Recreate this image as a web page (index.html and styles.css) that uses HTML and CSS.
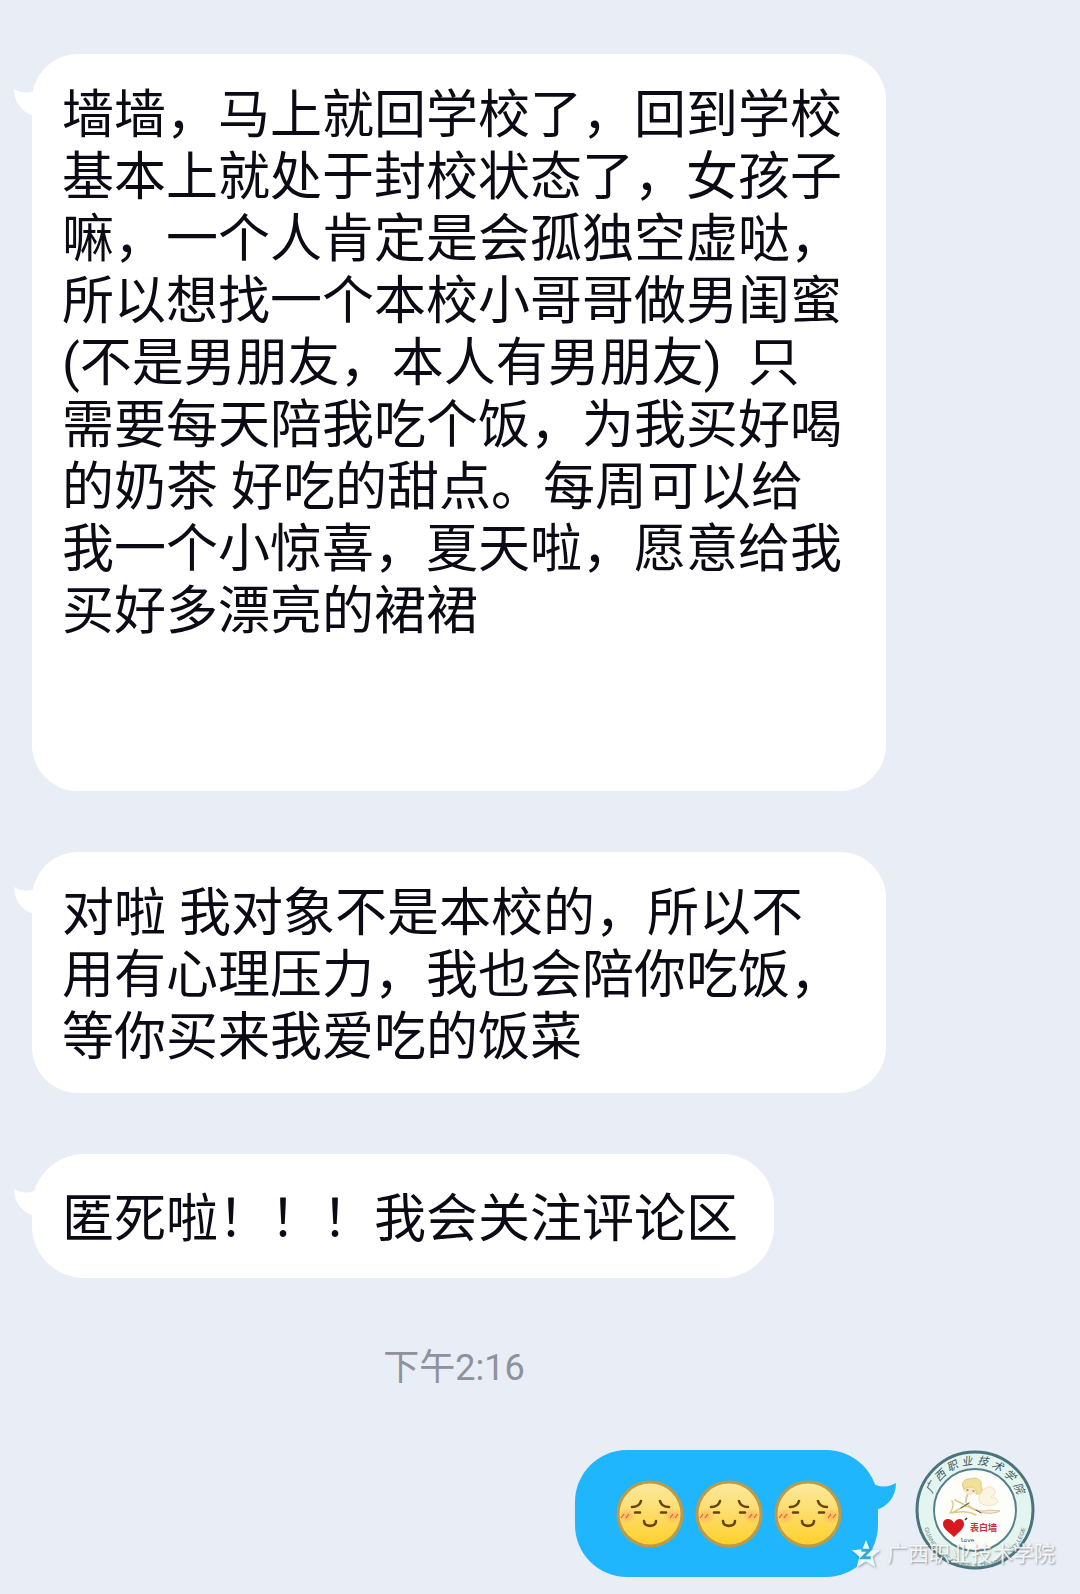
FILE: index.html
```html
<!DOCTYPE html>
<html lang="zh-CN">
<head>
    <meta charset="UTF-8">
    <meta name="viewport" content="width=device-width, initial-scale=1.0">
    <title>聊天</title>
    <link rel="stylesheet" href="styles.css">
</head>
<body>
    <!-- Shared shapes -->
    <svg class="defs" aria-hidden="true">
        <defs>
            <linearGradient id="faceFill" x1="0" y1="0" x2="0" y2="1">
                <stop offset="0" stop-color="#fbe9a0"/>
                <stop offset="0.5" stop-color="#fddc68"/>
                <stop offset="1" stop-color="#ffd029"/>
            </linearGradient>
            <radialGradient id="blush">
                <stop offset="0" stop-color="#f99a5c" stop-opacity="0.6"/>
                <stop offset="1" stop-color="#f99a5c" stop-opacity="0"/>
            </radialGradient>
            <symbol id="face" viewBox="0 0 68 68">
                <circle cx="34" cy="34" r="32" fill="url(#faceFill)" stroke="#bd9a48" stroke-width="3"/>
                <ellipse cx="11" cy="36" rx="9" ry="8" fill="url(#blush)"/>
                <ellipse cx="57" cy="36" rx="9" ry="8" fill="url(#blush)"/>
                <g fill="none" stroke="#6b4310" stroke-width="2.6" stroke-linecap="round">
                    <path d="M16 27c5 0 8-2 9-6"/>
                    <path d="M53 27c-5 0-8-2-9-6"/>
                    <path d="M19 32.500h5M45 32.500h5"/>
                    <path d="M28 41c0 6.500 12 6.500 12 0"/>
                </g>
                <path d="M5 38l3-4M10 38l3-4M54 38l3-4M59 38l3-4" stroke="#d9663a" stroke-width="1.200"/>
            </symbol>
            <symbol id="tail" viewBox="0 0 26 28">
                <path d="M0 1C5 4 12 6 20 3L26 0V28H20C9 25 0 15 0 1z"/>
            </symbol>
        </defs>
    </svg>

    <main class="chat">
        <!-- Received messages -->
        <section class="incoming">
            <div class="bubble">
                <svg class="tail"><use href="#tail"/></svg>
                <p>墙墙，马上就回学校了，回到学校<br>基本上就处于封校状态了，女孩子<br>嘛，一个人肯定是会孤独空虚哒，<br>所以想找一个本校小哥哥做男闺蜜<br>(不是男朋友，本人有男朋友)&nbsp; 只<br>需要每天陪我吃个饭，为我买好喝<br>的奶茶 好吃的甜点。每周可以给<br>我一个小惊喜，夏天啦，愿意给我<br>买好多漂亮的裙裙<br><br><br></p>
            </div>
            <div class="bubble">
                <svg class="tail"><use href="#tail"/></svg>
                <p>对啦 我对象不是本校的，所以不<br>用有心理压力，我也会陪你吃饭，<br>等你买来我爱吃的饭菜</p>
            </div>
            <div class="bubble bubble-short">
                <svg class="tail"><use href="#tail"/></svg>
                <p>匿死啦！！！我会关注评论区</p>
            </div>
            <time class="time">下午2:16</time>
        </section>

        <!-- Sent message -->
        <section class="outgoing">
            <div class="bubble bubble-sent">
                <svg class="emoji"><use href="#face"/></svg>
                <svg class="emoji"><use href="#face"/></svg>
                <svg class="emoji"><use href="#face"/></svg>
                <svg class="tail"><use href="#tail"/></svg>
            </div>
            <svg class="avatar" viewBox="0 0 120 120">
                <defs>
                    <path id="arcBottom" d="M8 66a52 52 0 0 0 104 0"/>
                </defs>
                <circle cx="60" cy="60" r="58" fill="#e4f5f0" stroke="#4b737d" stroke-width="3"/>
                <circle cx="60" cy="60" r="41" fill="#fdfefa" stroke="#55808a" stroke-width="2"/>
                <text class="seal-name" x="17 24 34 47 62 76 88 98" y="44 32 22 16 14 17 24 35" rotate="-63 -45 -27 -9 9 27 45 63">广西职业技术学院</text>
                <text class="seal-latin"><textPath href="#arcBottom" startOffset="50%" text-anchor="middle">GUANGXI VOCATIONAL &amp; TECHNICAL COLLEGE</textPath></text>
                <!-- Cupid -->
                <g fill="none" stroke-linecap="round" stroke-linejoin="round">
                    <path d="M64 47c3-9 11-13 15-8 3 4 0 6-3 8 5 0 8 3 6 6-4 4-12 3-17 0z" fill="#fbf5e2" stroke="#f0e4c0"/>
                    <path d="M53 43c-4 5-3 11 3 14 6 4 12 5 18 3 4 0 7 1 11 1-6 3-16 3-22 0-5-1-9-4-12-8z" fill="#fbead4" stroke="#dcc09a"/>
                    <circle cx="55" cy="38" r="7" fill="#fbe7c8"/>
                    <path d="M49 39c-4-6 1-11 6-10 7-3 13 2 11 7 3 4 0 9-5 8 1-5-2-7-6-7-2 0-4 1-6 2z" fill="#f0e09a" stroke="#e2cd80"/>
                    <path d="M37 51c3 5 0 9-2 12 8-1 17-3 26 2M40 50l20 10M37 63l16-9" stroke="#dfc98a" stroke-width="1.500"/>
                    <path d="M52 40h1M58 41h1M46 58l8-5M61 60l5 3" stroke="#5a4838"/>
                </g>
                <path d="M39 87c-5-5-11-8-11-13 0-6 8-7 11-1 3-6 10-5 10 1 0 5-5 8-10 13z" fill="#d71920"/>
                <path d="M50 70l2-2" stroke="#333" stroke-width="1.500"/>
                <text class="seal-wall" x="55" y="81">表白墙</text>
                <text class="seal-love" x="45" y="92">love</text>
            </svg>
            <div class="watermark">
                <svg class="star" viewBox="0 0 32 32">
                    <path d="M16 1l4 10 11 1-8 7 3 11-10-6-10 6 3-11-8-7 11-1z"/>
                    <path class="star-mark" d="M11 12h9l-8 8h9"/>
                </svg>
                <span>广西职业技术学院</span>
            </div>
        </section>
    </main>
</body>
</html>
```
FILE: styles.css
```css
* {
    box-sizing: border-box;
}
body {
    margin: 0;
    background-color: #e8edf6;
    color: #0c0a14;
    font-family: Roboto, "Noto Sans CJK SC", sans-serif;
    font-size: 52px;
    line-height: 62px;
}
.defs {
    position: absolute;
    width: 0;
    height: 0;
}
.chat {
    padding: 54px 0 16px;
}

/* Received messages */
.incoming {
    display: flex;
    flex-direction: column;
    align-items: flex-start;
    gap: 61px;
    padding: 0 194px 0 32px;
}
.bubble {
    position: relative;
    width: 100%;
    padding: 31px 30px 24px;
    border-radius: 46px;
    background-color: #fff;
}
.bubble p {
    margin: 0;
    white-space: nowrap;
}
.bubble-short {
    width: auto;
    padding: 35px 36px 27px 30px;
    border-radius: 52px;
}
.tail {
    position: absolute;
    top: 34px;
    left: -18px;
    width: 26px;
    height: 28px;
    fill: #fff;
}
.time {
    align-self: center;
    margin: 4px 10px 0 0;
    color: #8f919c;
    font-size: 36px;
    line-height: 50px;
}

/* Sent message */
.outgoing {
    position: relative;
    display: flex;
    justify-content: flex-end;
    gap: 37px;
    margin-top: 57px;
    padding-right: 45px;
}
.bubble-sent {
    display: flex;
    align-items: center;
    gap: 11px;
    width: auto;
    height: 127px;
    padding: 0 36px 0 41px;
    border-radius: 52px;
    background-color: #1fb6fd;
}
.bubble-sent .tail {
    top: 32px;
    left: auto;
    right: -18px;
    fill: #1fb6fd;
    transform: scaleX(-1);
}
.emoji {
    width: 68px;
    height: 68px;
}
.avatar {
    width: 120px;
    height: 120px;
}
.seal-name {
    fill: #3d5560;
    font-family: "Noto Sans CJK SC", sans-serif;
    font-size: 11px;
    font-style: italic;
}
.seal-latin {
    fill: #5f7f86;
    font-family: "Liberation Sans", sans-serif;
    font-size: 6px;
}
.seal-wall {
    fill: #cf2b3c;
    font-size: 9px;
    font-weight: 700;
}
.seal-love {
    fill: #333;
    font-family: "Liberation Mono", monospace;
    font-size: 6px;
}

/* Watermark over the corner */
.watermark {
    position: absolute;
    right: 25px;
    bottom: 8px;
    display: flex;
    align-items: center;
    gap: 6px;
    color: rgba(255, 255, 255, 0.85);
    font-size: 21px;
    line-height: 30px;
    text-shadow: 1px 1px 2px rgba(80, 90, 100, 0.6);
}
.star {
    width: 30px;
    height: 30px;
    fill: #e6faff;
    filter: drop-shadow(1px 1px 1px rgba(80, 90, 100, 0.5));
}
.star-mark {
    fill: none;
    stroke: #35a9d8;
    stroke-width: 3;
}
```
